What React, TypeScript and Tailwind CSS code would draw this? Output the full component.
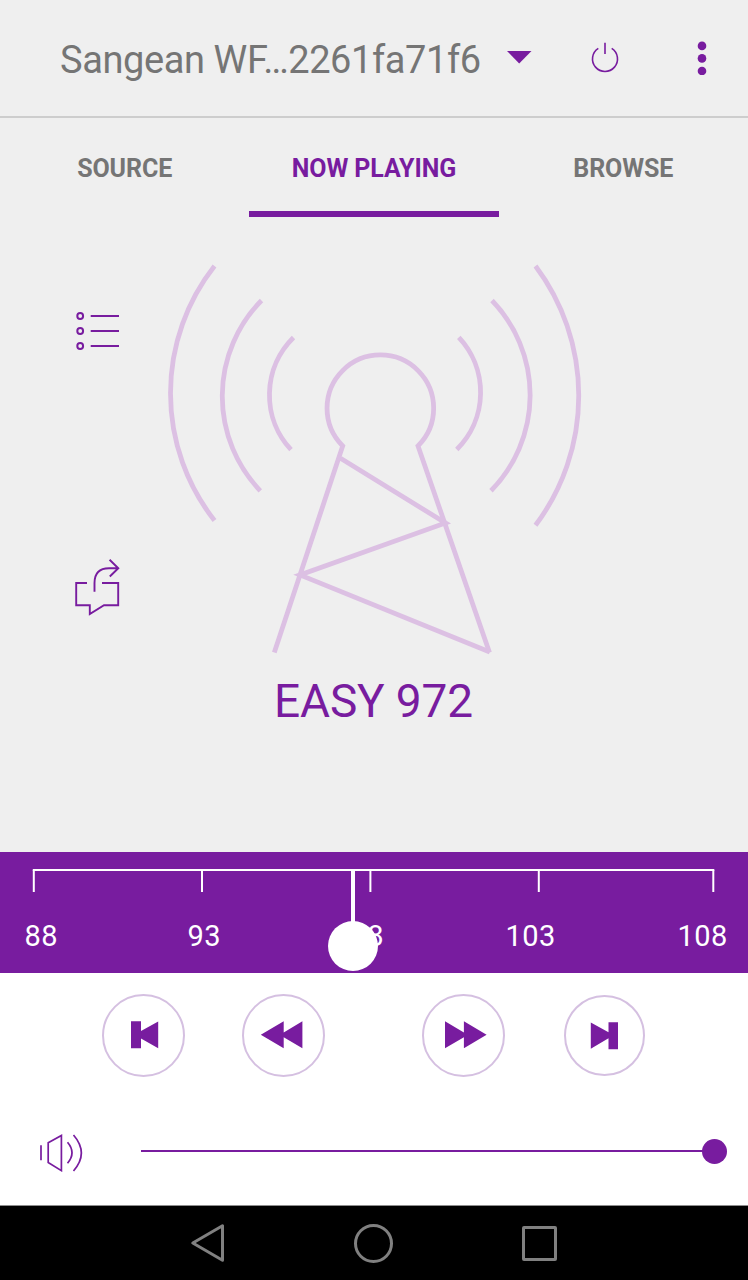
import type { ReactNode } from "react";

const tabs = ["SOURCE", "NOW PLAYING", "BROWSE"];
const ticks = [33.8, 202, 370.4, 538.8, 713.3];
const frequencies = ["88", "93", "98", "103", "108"];

const Header = () => {
    return (
        <header className="flex h-[118px] items-center border-b-2 border-[#cdcdcd] pl-[60px]">
            <h1 className="w-[447px] whitespace-nowrap pt-[4px] text-[38px] leading-none tracking-[-0.4px] text-[#757575]">
                Sangean WF…2261fa71f6
            </h1>
            <svg className="mt-[-2px] h-[14px] w-[25px]" viewBox="507 50 25 14" fill="#781c9f">
                <path d="M507 51H531.5L519.2 63.5Z" />
            </svg>
            <button aria-label="power" className="ml-[56px]">
                <svg className="h-[34px] w-[34px]" viewBox="588 41 34 34" fill="none" stroke="#781c9f" strokeWidth="1.6">
                    <path d="M598.3 48.4A12.5 12.5 0 1 0 611.7 48.4M605 42.7V54" />
                </svg>
            </button>
            <button aria-label="menu" className="ml-[74px]">
                <svg className="h-[34px] w-[12px]" viewBox="696 41 12 34" fill="#781c9f">
                    <circle cx="702" cy="45.9" r="4.3" />
                    <circle cx="702" cy="58.4" r="4.3" />
                    <circle cx="702" cy="71" r="4.3" />
                </svg>
            </button>
        </header>
    );
};

const Tabs = () => {
    return (
        <nav className="grid h-[99px] grid-cols-3 text-[25px] font-bold leading-none tracking-[-0.1px]">
            {tabs.map((tab) => (
                <button
                    key={tab}
                    className={
                        tab === "NOW PLAYING"
                            ? "border-b-[6px] border-[#781c9f] pt-2 text-[#781c9f]"
                            : "border-b-[6px] border-transparent pt-2 text-[#757575]"
                    }
                >
                    {tab}
                </button>
            ))}
        </nav>
    );
};

const ListIcon = () => (
    <svg className="h-[40px] w-[46px]" viewBox="75 311 46 40" fill="none" stroke="#781c9f" strokeWidth="2">
        <circle cx="80.2" cy="316" r="2.9" />
        <circle cx="80.2" cy="331" r="2.9" />
        <circle cx="80.2" cy="346" r="2.9" />
        <path d="M90.7 316H119M90.7 331H119M90.7 346H119" />
    </svg>
);

const ShareIcon = () => (
    <svg className="h-[58px] w-[46px]" viewBox="75 559 46 58" fill="none" stroke="#781c9f" strokeWidth="1.9">
        <path d="M87 583H76.2V605.2H89.8V614L104 605.2H118.2V583H102" />
        <path d="M94.5 591.7V583Q94.5 568.2 109 568.2H118M109.6 559.8L118.3 568.2L109.8 576.5" />
    </svg>
);

const Tower = () => (
    <svg className="h-[400px] w-[430px]" viewBox="160 260 430 400" fill="none" stroke="#dcc0e3" strokeWidth="4.8">
        <path d="M214.5 266A206 206 0 0 0 214.5 520.5" />
        <path d="M261.5 300.5A136.5 136.5 0 0 0 260.3 490.8" />
        <path d="M293.5 337.5A80.5 80.5 0 0 0 291 449.7" />
        <path d="M458.8 337.3A80.5 80.5 0 0 1 456.8 449.5" />
        <path d="M492 300.5A136.5 136.5 0 0 1 491 490.8" />
        <path d="M535.5 266A216 216 0 0 1 535.5 525.3" />
        <path d="M274.3 652.5L342.7 446A53.3 53.3 0 1 1 418 446L489.5 652.5" />
        <path d="M489.8 652L300 575L445.5 523L340.5 458.3" />
    </svg>
);

const NowPlaying = () => {
    return (
        <main className="h-[635px]">
            <div className="flex pl-[75px]">
                <div className="flex w-[85px] flex-col items-start gap-[208px] pt-[94px]">
                    <ListIcon />
                    <ShareIcon />
                </div>
                <div className="pt-[43px]">
                    <Tower />
                </div>
            </div>
            <p className="mt-[18px] pr-px text-center text-[46px] leading-[46px] tracking-[-0.15px] text-[#781c9f]">
                EASY 972
            </p>
        </main>
    );
};

const Tuner = () => {
    return (
        <section className="relative h-[121px] bg-[#781c9f] text-white">
            <svg className="block h-[64px] w-full" viewBox="0 852 748 64" fill="none" stroke="#fff" strokeWidth="2">
                <path d="M32.8 870H714.3" />
                {ticks.map((x) => (
                    <path key={x} d={`M${x} 870V892`} />
                ))}
            </svg>
            <div className="grid grid-cols-[163px_163px_155px_172px_auto] pl-[24.5px] pt-[5px] text-[29px] leading-[30px] tracking-[0.4px]">
                {frequencies.map((f) => (
                    <span key={f}>{f}</span>
                ))}
            </div>
            <div className="absolute left-[328px] top-[18px] flex w-[50px] flex-col items-center">
                <div className="h-[52px] w-1 bg-white" />
                <div className="-mt-px size-[50px] rounded-full bg-white" />
            </div>
        </section>
    );
};

const RoundButton = ({ label, className, children }: { label: string; className: string; children: ReactNode }) => (
    <button
        aria-label={label}
        className={`flex items-center justify-center rounded-full border-2 border-[#d5c0e1] text-[#781c9f] ${className}`}
    >
        {children}
    </button>
);

const Transport = () => {
    return (
        <div className="flex h-[104px] items-center pl-[102px] pt-[21px]">
            <RoundButton label="previous" className="size-[83px]">
                <svg className="size-[60px]" viewBox="114 1006 60 60" fill="currentColor">
                    <path d="M131 1021.2H141V1031L158.2 1021.5V1048.2L141 1038.5V1048.2H131Z" />
                </svg>
            </RoundButton>
            <RoundButton label="rewind" className="ml-[57px] size-[83px]">
                <svg className="size-[60px]" viewBox="254 1006 60 60" fill="currentColor">
                    <path d="M260.8 1034.8L283.7 1021.3V1032.4L302.4 1021.3V1048.2L283.7 1037.2V1048.2Z" />
                </svg>
            </RoundButton>
            <RoundButton label="fast forward" className="ml-[97px] size-[83px]">
                <svg className="size-[60px]" viewBox="434 1006 60 60" fill="currentColor">
                    <path d="M486.6 1034.8L463.9 1021.3V1032.4L445 1021.3V1048.2L463.9 1037.2V1048.2Z" />
                </svg>
            </RoundButton>
            <RoundButton label="next" className="ml-[59px] size-[81px]">
                <svg className="size-[60px]" viewBox="575 1006 60 60" fill="currentColor">
                    <path d="M590.8 1022.4L608.5 1032.3V1022.2H618V1049.2H608.5V1038.2L590.8 1048.7Z" />
                </svg>
            </RoundButton>
        </div>
    );
};

const Volume = () => {
    return (
        <div className="flex items-center pl-[38px] pt-[53px]">
            <svg className="h-[42px] w-[48px]" viewBox="38 1129.8 48 42" fill="none" stroke="#781c9f" strokeWidth="1.7">
                <path d="M41 1145V1160M48.2 1142.6L61.4 1135.2V1170.4L48.2 1162.3Z" />
                <path d="M67.5 1142Q76.5 1152.5 67.5 1163M73.5 1134.8Q89.2 1153 73.5 1170.8" />
            </svg>
            <div className="ml-[55px] h-[2px] w-[562px] bg-[#781c9f]" />
            <div className="-ml-px size-[25px] rounded-full bg-[#781c9f]" />
        </div>
    );
};

const SystemBar = () => {
    return (
        <footer className="flex h-[75px] items-center border-t border-[#8d8d8d] bg-black pl-[189px] text-[#808080]">
            <svg className="h-[40px] w-[36px]" viewBox="189 1223.5 36 40" fill="none" stroke="currentColor" strokeWidth="3" strokeLinejoin="round">
                <path d="M192.8 1243.5L222.5 1226.2V1260.8Z" />
            </svg>
            <div className="ml-[129px] size-[39px] rounded-full border-[3px] border-[#808080]" />
            <div className="ml-[129px] size-[35px] rounded-[2px] border-[3px] border-[#808080]" />
        </footer>
    );
};

const App = () => {
    return (
        <div className="flex h-[1280px] w-[748px] flex-col overflow-hidden bg-[#efefef] font-[Roboto,sans-serif]">
            <Header />
            <Tabs />
            <NowPlaying />
            <Tuner />
            <section className="h-[232px] bg-white">
                <Transport />
                <Volume />
            </section>
            <SystemBar />
        </div>
    );
};

export default App;
